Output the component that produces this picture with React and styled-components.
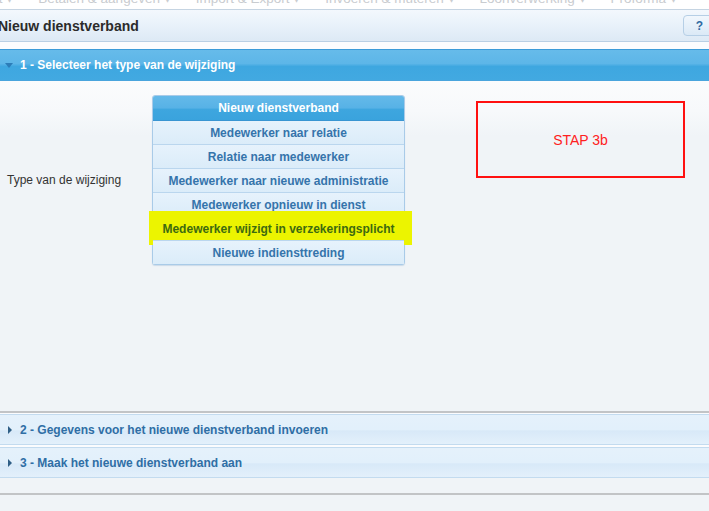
import React from "react";
import styled, { createGlobalStyle } from "styled-components";

const GlobalStyle = createGlobalStyle`
  html, body {
    margin: 0;
    padding: 0;
    background: #f0f4f7;
    font-family: "Liberation Sans", Arial, sans-serif;
  }
`;

const Page = styled.div`
  width: 709px;
  height: 511px;
  overflow: hidden;
  background: #f0f4f7;
`;

const MenuStrip = styled.div`
  height: 9px;
  overflow: hidden;
  background: #ffffff;
  border-bottom: 1px solid #c5d4e2;
`;

const MenuItems = styled.div`
  display: flex;
  gap: 25px;
  margin-top: -10px;
  margin-left: -128px;
  white-space: nowrap;
  font-size: 13.5px;
  color: #c9ccd0;
`;

const TitleBar = styled.div`
  height: 31px;
  display: flex;
  align-items: center;
  justify-content: space-between;
  background: linear-gradient(#f3f8fd, #e8f1fa 50%, #dde9f5);
  border-bottom: 1px solid #b9cfe4;
`;

const Title = styled.h1`
  margin: 0 0 0 -2px;
  font-size: 14px;
  font-weight: bold;
  color: #2b2b2b;
`;

const HelpButton = styled.button`
  width: 31px;
  height: 21px;
  margin-right: -5px;
  padding: 0 10px 0 0;
  text-align: right;
  border: 1px solid #b6cfe6;
  border-radius: 4px;
  background: linear-gradient(#f1f7fd, #dbe9f6);
  color: #2f6aa2;
  font-family: inherit;
  font-weight: bold;
  font-size: 12px;
`;

const Gap = styled.div`
  height: 7px;
  background: #fbfcfe;
`;

const SectionHeader = styled.div`
  height: ${(p) => (p.active ? "30px" : "29px")};
  display: flex;
  align-items: center;
  gap: ${(p) => (p.active ? "7px" : "8px")};
  padding-left: ${(p) => (p.active ? "5px" : "8px")};
  font-size: 12px;
  font-weight: bold;
  color: ${(p) => (p.active ? "#ffffff" : "#2f6ea5")};
  background: ${(p) =>
    p.active
      ? "linear-gradient(#66bbea, #5db6e8 45%, #3ea7e0 55%, #42a9e1)"
      : "linear-gradient(#e5f1fb, #e2f0fb 50%, #d8e9f8 55%, #e3f0fb)"};
  border-top: 1px solid ${(p) => (p.active ? "#3b9bd9" : "#c3dbef")};
  border-bottom: 1px solid ${(p) => (p.active ? "#4aa5dd" : "#c3dbef")};
`;

const Caret = styled.span`
  width: 0;
  height: 0;
  ${(p) =>
    p.open
      ? `border-left: 4px solid transparent;
         border-right: 4px solid transparent;
         border-top: 5px solid #2c7db8;`
      : `border-top: 4px solid transparent;
         border-bottom: 4px solid transparent;
         border-left: 4px solid #2f5f86;`}
`;

const Content = styled.div`
  height: 332px;
  display: flex;
  align-items: flex-start;
  padding-top: 14px;
  box-sizing: border-box;
  background: linear-gradient(#fbfcfd, #f7f9fb 30px, #f0f4f7 55px);
  border-bottom: 2px solid #c2c4c6;
`;

const FieldRow = styled.div`
  display: flex;
  align-items: center;
`;

const Label = styled.div`
  width: 145px;
  padding-left: 7px;
  font-size: 12px;
  color: #333333;
`;

const OptionList = styled.div`
  width: 251px;
  border: 1px solid #a9cbe8;
  border-radius: 3px;
  background: #dfeefa;
  box-shadow: 0 1px 1px rgba(120, 160, 200, 0.3);
`;

const OptionHeader = styled.div`
  height: 24px;
  display: flex;
  align-items: center;
  justify-content: center;
  border-radius: 2px 2px 0 0;
  background: linear-gradient(#64b9e9, #57b2e6 50%, #3ea6df 55%, #3aa3dd);
  border-bottom: 1px solid #3995d2;
  color: #ffffff;
  font-size: 12px;
  font-weight: bold;
`;

const Option = styled.div`
  position: relative;
  height: 23px;
  display: flex;
  align-items: center;
  justify-content: center;
  border-top: ${(p) => (p.first ? "none" : "1px solid #bad6ee")};
  background: linear-gradient(#e6f2fc, #dbecf9);
  color: ${(p) => (p.marked ? "#3d6a10" : "#3574ab")};
  font-size: 12px;
  font-weight: bold;

  ${(p) =>
    p.marked &&
    `&::before {
      content: "";
      position: absolute;
      left: -4px;
      right: -8px;
      top: -6px;
      bottom: -5px;
      background: #ecf400;
    }`}
`;

const OptionText = styled.span`
  position: relative;
`;

const StepBox = styled.div`
  width: 205px;
  height: 73px;
  margin: 6px 0 0 71px;
  display: flex;
  align-items: center;
  justify-content: center;
  border: 2px solid #ff1010;
  color: #ff2020;
  font-size: 14px;
`;

const SectionGap = styled.div`
  height: ${(p) => p.h}px;
  background: #fbfcfe;
`;

const Footer = styled.div`
  height: 15px;
  background: #f0f4f7;
  border-bottom: 2px solid #c2c4c6;
`;

const options = [
  "Medewerker naar relatie",
  "Relatie naar medewerker",
  "Medewerker naar nieuwe administratie",
  "Medewerker opnieuw in dienst",
  "Medewerker wijzigt in verzekeringsplicht",
  "Nieuwe indiensttreding",
];

const menu = [
  "Informatie & overzicht ▾",
  "Betalen & aangeven ▾",
  "Import & Export ▾",
  "Invoeren & muteren ▾",
  "Loonverwerking ▾",
  "Proforma ▾",
];

export default function App() {
  return (
    <Page>
      <GlobalStyle />
      <MenuStrip>
        <MenuItems>
          {menu.map((m) => (
            <span key={m}>{m}</span>
          ))}
        </MenuItems>
      </MenuStrip>
      <TitleBar>
        <Title>Nieuw dienstverband</Title>
        <HelpButton>?</HelpButton>
      </TitleBar>
      <Gap />
      <SectionHeader active>
        <Caret open />
        1 - Selecteer het type van de wijziging
      </SectionHeader>
      <Content>
        <FieldRow>
          <Label>Type van de wijziging</Label>
          <OptionList>
            <OptionHeader>Nieuw dienstverband</OptionHeader>
            {options.map((o, i) => (
              <Option key={o} first={i === 0} marked={i === 4}>
                <OptionText>{o}</OptionText>
              </Option>
            ))}
          </OptionList>
        </FieldRow>
        <StepBox>STAP 3b</StepBox>
      </Content>
      <SectionGap h={1} />
      <SectionHeader>
        <Caret />
        2 - Gegevens voor het nieuwe dienstverband invoeren
      </SectionHeader>
      <SectionGap h={2} />
      <SectionHeader>
        <Caret />
        3 - Maak het nieuwe dienstverband aan
      </SectionHeader>
      <Footer />
    </Page>
  );
}
